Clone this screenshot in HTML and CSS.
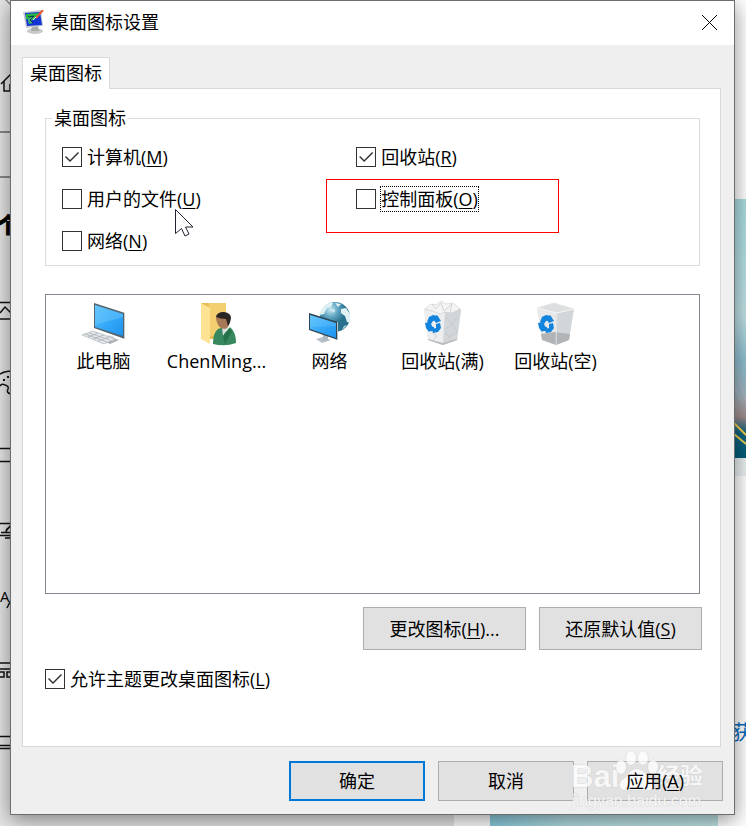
FILE: index.html
```html
<!DOCTYPE html>
<html lang="zh-CN">
<head>
<meta charset="utf-8">
<meta name="viewport" content="width=device-width, initial-scale=1">
<title>桌面图标设置</title>
<link rel="stylesheet" href="styles.css">
</head>
<body>
<svg class="backdrop" viewBox="0 0 746 826" preserveAspectRatio="none" aria-hidden="true">
  <defs>
    <linearGradient id="sky" x1="0" y1="0" x2="0" y2="1">
      <stop offset="0" stop-color="#a9dce0"/><stop offset=".45" stop-color="#bfe2e6"/><stop offset=".62" stop-color="#8fc0d0"/>
      <stop offset=".75" stop-color="#9eb4c0"/><stop offset=".84" stop-color="#a28d8b"/><stop offset=".9" stop-color="#12647e"/><stop offset="1" stop-color="#005c7a"/>
    </linearGradient>
    <linearGradient id="lake"><stop offset="0" stop-color="#8acbdd"/><stop offset=".35" stop-color="#b4dde2"/><stop offset="1" stop-color="#bfe3e5"/></linearGradient>
  </defs>
  <rect width="454" height="826" fill="#e6e6e6"/>
  <rect x="454" width="292" height="826" fill="#fff"/>
  <rect x="490" y="780" width="228" height="46" fill="url(#lake)"/>
  <rect x="700" y="199" width="46" height="259" fill="url(#sky)"/>
  <rect x="700" y="458" width="46" height="18" fill="#eaf1f2"/>
  <path d="M734 423l12 12M734 434l12 10" stroke="#f0cf4e" stroke-width="2"/>
  <path d="M735 385q4 16 11 20M737 372l9 30" stroke="#b9b9c4" stroke-width=".7" fill="none"/>
  <g fill="none" stroke="#111" stroke-width="1.5">
    <path d="M5-1l6 6" stroke="#888"/>
    <path d="M1 84L12 73M4 81v10h6v-7"/>
    <path d="M0 132h12M0 177h12" stroke="#888" stroke-width="2"/>
    <path d="M0 302.500h12M0 319h12M0 313l5-6 6 6M0 448.500h12M0 461.500h12"/>
    <path d="M0 374q5-3 12-3M0 386q2-3 5-1 4 1 3 4-2 4 3 5"/>
    <path d="M0 523.500h12M1 532.500h10M0 535.500h12M6 532q0-4 5-5M11 525l-5 6M5 538h6"/>
    <path d="M11 600l-4 8M0 663h12M0 669h12M0 672h4v5H0M7 672h5v5H7zM0 736.500h12M0 745.500h12M0 748.500h12"/>
  </g>
  <path d="M3 379h2v2H3zM7 376h2v2H7z" fill="#111"/>
  <text class="side-heading" x="-3" y="233">个</text>
  <text class="side-letter" x="0" y="602">A</text>
  <text class="side-link" x="732" y="740">获</text>
</svg>

<main class="dialog">
  <header class="titlebar">
    <svg class="app-icon" width="22" height="24" viewBox="0 0 22 24" aria-hidden="true">
      <ellipse cx="12" cy="21" rx="8" ry="3" fill="#c9c9c9"/><path d="M9 16h6l1 5H8z" fill="#aaa"/>
      <path d="M0 2l18-2 2 16-17 2z" fill="#c5cbcf"/><path d="M2 3l15-1 2 13-15 1z" fill="#1534d4"/>
      <path d="M3 4l13-1-5 7-8-1z" fill="#28b940"/><path d="M5 8l5-2 2 3-4 1 2 3-4 1-1-3z" fill="#39b96a"/><path d="M5 7l6-1-4 4 3 3" fill="none" stroke="#082f56"/>
      <path d="M20 0l-7 8" stroke="#e8552f" stroke-width="2"/><path d="M13 7l-3 3" stroke="#dfe" stroke-width="1"/>
    </svg>
    <h1>桌面图标设置</h1>
    <button class="close" type="button" aria-label="关闭">
      <svg width="17" height="17" viewBox="0 0 17 17"><path d="M1 1l15 15M16 1L1 16" stroke="#000" stroke-width="1"/></svg>
    </button>
  </header>

  <div class="content">
    <div class="tabs" role="tablist"><button class="tab" type="button" role="tab" aria-selected="true">桌面图标</button></div>
    <section class="panel">
      <fieldset class="group">
        <legend>桌面图标</legend>
        <div class="options">
          <div class="option"><input type="checkbox" id="computer" checked><label for="computer">计算机(<u>M</u>)</label></div>
          <div class="option"><input type="checkbox" id="recycle" checked><label for="recycle">回收站(<u>R</u>)</label></div>
          <div class="option"><input type="checkbox" id="files"><label for="files">用户的文件(<u>U</u>)</label>
            <svg class="cursor" width="20" height="29" viewBox="0 0 20 29" aria-hidden="true"><path d="M.5.5v24l6-5 3.500 7.500 4-2-3.500-7h7.500z" fill="#fff" stroke="#223" stroke-width="1"/></svg>
          </div>
          <div class="option marked"><input type="checkbox" id="control"><label class="focused" for="control">控制面板(<u>O</u>)</label></div>
          <div class="option"><input type="checkbox" id="network"><label for="network">网络(<u>N</u>)</label></div>
        </div>
      </fieldset>

      <ul class="icons">
        <li>
          <svg width="48" height="48" viewBox="0 0 48 48" aria-hidden="true">
            <defs><linearGradient id="screen" x1="0" y1="0" x2="1" y2="1"><stop offset="0" stop-color="#5cc1fb"/><stop offset=".5" stop-color="#36a9f8"/><stop offset="1" stop-color="#1c93ee"/></linearGradient></defs>
            <path d="M22 41l8-3 9 3-9 4z" fill="#a9b1b5"/><path d="M28 36l6 2v4h-4z" fill="#cbd2d5"/>
            <path d="M14 4l31 10v26L14 29z" fill="#53646f"/><path d="M44 14l1 0v26l-1 0z" fill="#c4cbd0"/><path d="M15 6l28 9v22l-28-9z" fill="url(#screen)"/><path d="M15 6l28 9v3L15 26z" fill="#7bd0ff" opacity=".35"/>
            <path d="M2 36l11-4 22 8-11 5z" fill="#e5e8ea" stroke="#aeb5b9" stroke-width=".7"/><path d="M5 35l22 8M9 34l21 7M8 38l10-4M13 40l11-4M18 42l11-4" stroke="#aab1b6" stroke-width=".8"/>
          </svg>
          <span>此电脑</span>
        </li>
        <li>
          <svg width="48" height="48" viewBox="0 0 48 48" aria-hidden="true">
            <path d="M8 4h25v36H8z" fill="#e9bd53"/><path d="M16 4h17v28L16 38z" fill="#f3cf70"/><path d="M8 4l9 5v36l-9-5z" fill="#ffe394"/><path d="M29 27l4-1v10h-4z" fill="#f7d779"/>
            <path d="M20 45c0-10 3-16 9-16l5 4 3-5c4 4 6 8 6 16q-11 4-23 1z" fill="#37885f"/><path d="M29 28l1 9 6-9-3-3z" fill="#d9e0dd"/><path d="M30 37l6-8 3 3-7 13z" fill="#26724b"/>
            <path d="M23 19q0-6 8-6 6 1 6 8-1 9-6 9-7-1-8-11z" fill="#a87856"/><path d="M23 18q1-5 8-5 7 1 7 6-1 6-3 8l-2-7q-5 0-10-2z" fill="#292624"/>
          </svg>
          <span>ChenMing...</span>
        </li>
        <li>
          <svg width="48" height="48" viewBox="0 0 48 48" aria-hidden="true">
            <defs><radialGradient id="globe" cx=".35" cy=".25"><stop offset="0" stop-color="#c9e8f2"/><stop offset=".5" stop-color="#5fa5c2"/><stop offset="1" stop-color="#28718e"/></radialGradient></defs>
            <circle cx="29" cy="18" r="15" fill="url(#globe)"/>
            <path d="M18 8q5-5 9-4l-2 4-4 1-3 6-5 1q1-5 5-8zM29 4l6 1-3 3zM35 10l5-1 4 6v9l-3-1-2-6-4-3zM25 10l4 1-1 3z" fill="#e0f1f4"/><path d="M38 27l3-1-5 5z" fill="#c9e3e7"/>
            <path d="M10 40l7-2 8 3-9 3z" fill="#b8c1c8"/><path d="M17 35l5 2v5h-5z" fill="#b1bac1"/>
            <path d="M3 14l29 9v18L3 31z" fill="#314552"/><path d="M31 23l1 0v18l-1 0z" fill="#b7c3cb"/><path d="M4 16l26 8v15L4 30z" fill="url(#screen)"/><path d="M4 16l26 8v3L4 28z" fill="#78ccff" opacity=".3"/>
          </svg>
          <span>网络</span>
        </li>
        <li>
          <svg width="48" height="48" viewBox="0 0 48 48" aria-hidden="true">
            <defs>
              <g id="arrows">
                <path d="M10 18l4-2 5 1 1 4-6 1-2 3-4-2z"/><path d="M18 16l4 6-5 2-2-3z"/>
                <path d="M6 24l5-1 2 4-1 4-2 2-3-4z"/><path d="M11 27l4 1v4h-4z"/>
                <path d="M17 25l4-1 1 5-3 4-5 1-1-4 4-1z"/>
              </g>
            </defs>
            <path d="M5 10L23 4l19 6-4 31-15 5-14-5z" fill="#d9dcde"/><path d="M5 10l21 4-2 32-15-5z" fill="#eceeef"/><path d="M26 14l16-4-4 31-14 5z" fill="#d3d6d9"/>
            <path d="M6 10l6-5 5 1 5-4 5 3 7-1 7 6-8 4-7-1-5 2-7-3z" fill="#f4f4f4" stroke="#c9ccce" stroke-width=".6"/>
            <path d="M13 5l4 5 5-6 3 8 8-7-2 8M11 32l7 5-5 5M27 18l6 7 6-8M26 30l7-5 5 8-8 5-5-7M30 38l3 5" fill="none" stroke="#c1c5c8" stroke-width=".7"/><path d="M9 40l15 4 14-4v1l-14 5-15-5z" fill="#b5bbbe"/>
            <use class="recycle-mark" href="#arrows"/>
          </svg>
          <span>回收站(满)</span>
        </li>
        <li>
          <svg width="48" height="48" viewBox="0 0 48 48" aria-hidden="true">
            <path d="M5 9l17-5 20 6-17 4z" fill="#dcdedf" stroke="#e6e6e6"/><path d="M5 9l20 5-1 32-14-5z" fill="#e6e8e9"/><path d="M25 14l17-4-5 31-13 5z" fill="#d3d6d9"/>
            <path d="M9 35l13-2 2 13-14-5zM22 33l16 2-1 6-13 5z" fill="#b1b5b8"/><path d="M5 9l20 5 17-4" fill="none" stroke="#f5f5f5"/><path d="M25 14l-1 32" stroke="#dfe1e2"/>
            <use class="recycle-mark" href="#arrows"/>
          </svg>
          <span>回收站(空)</span>
        </li>
      </ul>

      <div class="actions">
        <button class="btn wide" type="button">更改图标(<u>H</u>)...</button>
        <button class="btn wide" type="button">还原默认值(<u>S</u>)</button>
      </div>
      <div class="option theme"><input type="checkbox" id="theme" checked><label for="theme">允许主题更改桌面图标(<u>L</u>)</label></div>
    </section>
  </div>

  <footer class="footer">
    <button class="btn primary" type="button">确定</button>
    <button class="btn" type="button">取消</button>
    <button class="btn" type="button"><span class="above">应用(<u>A</u>)</span></button>
  </footer>

  <svg class="watermark" width="140" height="70" viewBox="0 0 140 70" aria-hidden="true">
    <text class="brand" x="0" y="43">Bai</text>
    <ellipse cx="50" cy="23" rx="5" ry="7"/><ellipse cx="60" cy="14" rx="5" ry="7"/><ellipse cx="72" cy="14" rx="5" ry="7"/><ellipse cx="82" cy="23" rx="5" ry="7"/>
    <path d="M66 25q6 0 11 8 8 5 6 10-3 5-11 3H60q-8 2-11-3-2-5 6-10 5-8 11-8z"/>
    <text class="brand-cjk" x="86" y="40">经验</text>
    <text class="site" x="1" y="62">jingyan.baidu.com</text>
  </svg>
</main>
</body>
</html>
```
FILE: styles.css
```css
*,
*::before,
*::after {
  box-sizing: border-box;
}

body {
  margin: 0;
  padding: 0 11px 11px 10px;
  background: #f4f4f4;
  color: #000;
  font: 18px/26px "Open Sans", "Noto Sans CJK SC", sans-serif;
}

button {
  padding: 0;
  color: inherit;
  font: inherit;
}

u {
  text-underline-offset: 2px;
  text-decoration-thickness: 1px;
}

.backdrop {
  position: absolute;
  inset: 0;
  z-index: -1;
  width: 100%;
  height: 100%;
}

.side-heading {
  font-size: 22px;
  font-weight: 700;
  stroke: #000;
  stroke-width: 1px;
}

.side-letter {
  font-size: 15px;
}

.side-link {
  fill: #0067c0;
  font-size: 20px;
}

.dialog {
  position: relative;
  border: 1px solid #6b6e6e;
  background: #efefef;
  box-shadow: 0 5px 20px rgb(0 0 0 / 45%);
}

.titlebar {
  display: flex;
  align-items: center;
  height: 44px;
  padding: 0 13px 2px 12px;
  background: #fff;
}

h1 {
  flex: 1;
  margin: 0 0 0 6px;
  font-size: 18px;
  font-weight: 400;
}

.close {
  display: grid;
  place-items: center;
  width: 24px;
  height: 24px;
  border: 0;
  background: none;
}

.content {
  padding: 12px 13px 0 11px;
}

.tabs {
  display: flex;
}

.tab {
  position: relative;
  height: 32px;
  margin-bottom: -1px;
  padding: 0 7px 2px;
  border: 1px solid #d9d9d9;
  border-bottom: 0;
  background: #fff;
}

.panel {
  padding: 16px 18px 57px 22px;
  border: 1px solid #d9d9d9;
  background: #fff;
}

.group {
  min-width: 0;
  margin: 0 2px 0 0;
  padding: 5px 16px 3px;
  border: 1px solid #dcdcdc;
}

legend {
  margin-left: -10px;
  padding: 0 2px;
}

.options {
  display: grid;
  grid-template-columns: 9fr 10fr;
  grid-auto-rows: 42px;
}

.option {
  position: relative;
  display: flex;
  align-items: center;
  gap: 5px;
}

.option input {
  appearance: none;
  flex: none;
  width: 20px;
  height: 20px;
  margin: 0;
  border: 1px solid #333;
  background: #fff;
}

.option input:checked::before {
  content: "";
  display: block;
  width: 18px;
  height: 18px;
  background: #333;
  clip-path: polygon(2px 9px, 3px 8px, 7px 12px, 15px 4px, 16px 5px, 7px 14px);
}

.focused {
  line-height: 24px;
  outline: 1px dotted #000;
}

.marked::after {
  content: "";
  position: absolute;
  top: 1px;
  left: -30px;
  width: 233px;
  height: 54px;
  border: 1px solid #f00;
  pointer-events: none;
}

.cursor {
  position: absolute;
  top: 31px;
  left: 113px;
}

.icons {
  display: grid;
  grid-template-columns: repeat(auto-fill, 113px);
  align-content: start;
  min-height: 300px;
  margin: 28px 2px 0 0;
  padding: 4px 0 4px 1px;
  border: 1px solid #828790;
  list-style: none;
}

.icons li {
  display: flex;
  flex-direction: column;
  align-items: center;
  gap: 1px;
}

.recycle-mark {
  fill: #1384de;
}

.actions {
  display: flex;
  justify-content: flex-end;
  gap: 13px;
  margin-top: 13px;
}

.btn {
  width: 136px;
  height: 40px;
  border: 1px solid #adadad;
  background: #e1e1e1;
}

.wide {
  width: 163px;
  height: 43px;
}

.primary {
  border: 2px solid #0078d7;
}

.above {
  position: relative;
  z-index: 1;
}

.theme {
  height: 20px;
  margin-top: 19px;
}

.footer {
  display: flex;
  justify-content: flex-end;
  gap: 13px;
  padding: 14px 11px 13px;
}

.watermark {
  position: absolute;
  right: 23px;
  bottom: 0;
  fill: rgb(255 255 255 / 75%);
  stroke: rgb(205 205 205 / 60%);
  stroke-width: 1px;
  paint-order: stroke;
  pointer-events: none;
}

.brand {
  font: 700 31px "Liberation Sans", sans-serif;
}

.brand-cjk {
  font-size: 23px;
  font-weight: 700;
}

.site {
  font: 16px "Liberation Sans", sans-serif;
}
```
